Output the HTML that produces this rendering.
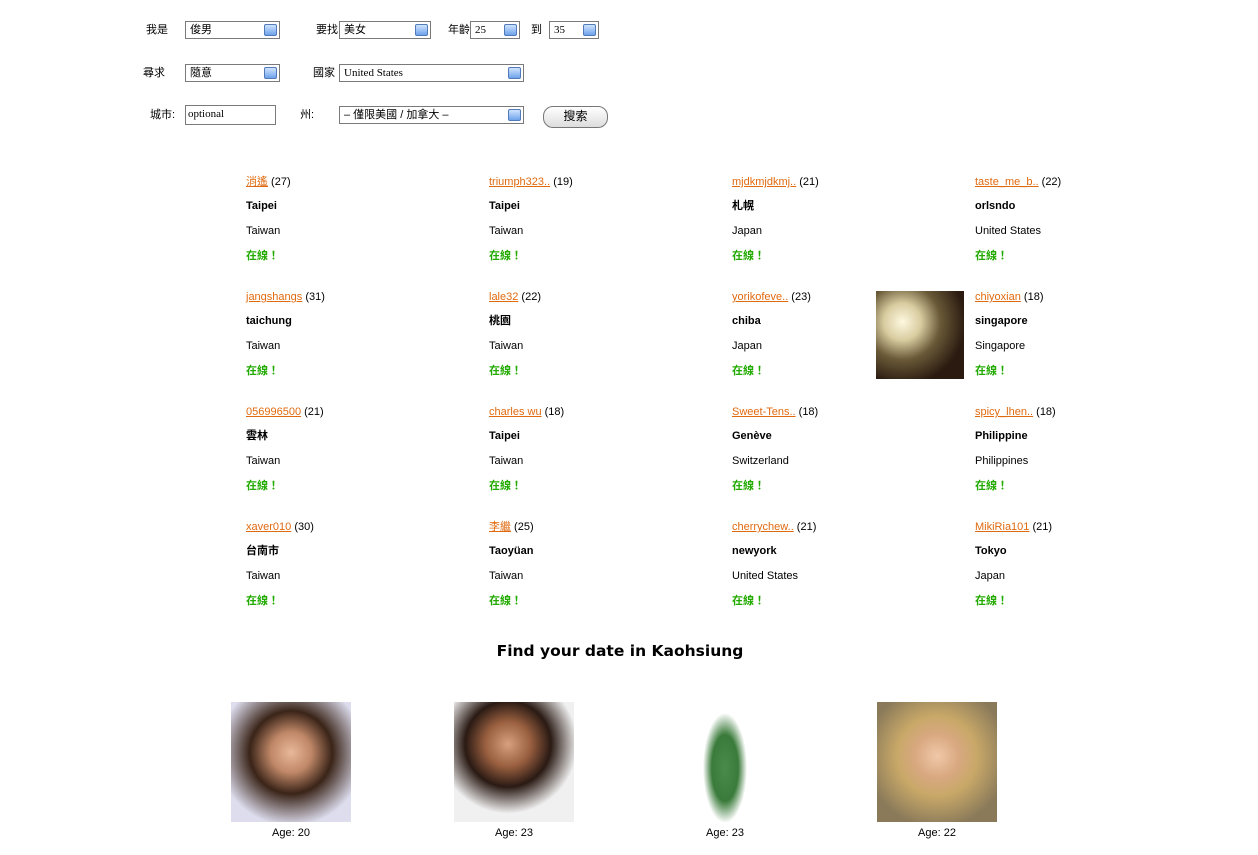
<!DOCTYPE html>
<html><head><meta charset="utf-8"><style>
body{margin:0;width:1258px;height:855px;background:#fff;position:relative;font-family:"Liberation Sans","Noto Sans CJK TC",sans-serif;font-size:11px;color:#000;overflow:hidden}
.a{position:absolute;white-space:nowrap;line-height:13px}
.sel{position:absolute;height:18px;border:1px solid #7a7a7a;box-sizing:border-box;background:#fff;font-size:11px;line-height:16px;padding-left:4px}
.sel:after{content:"";position:absolute;right:2px;top:2px;width:13px;height:12px;background:linear-gradient(#cfe3ff,#6ea3ea);border:1px solid #5279b8;border-radius:2px;box-sizing:border-box}
.inp{position:absolute;border:1px solid #7a7a7a;box-sizing:border-box;background:#fff;font-size:11px;line-height:16px;padding-left:2px}
.n{color:#e06a10;text-decoration:underline}
.c{font-weight:bold}
.o{color:#22aa00;font-weight:bold}
.ph{position:absolute;width:120px;height:120px}
.age{position:absolute;width:120px;text-align:center;font-size:11px}
</style></head><body>
<div class="a" style="left:146px;top:24px">我是</div>
<div class="sel" style="left:185px;top:21px;width:95px">俊男</div>
<div class="a" style="left:316px;top:24px">要找</div>
<div class="sel" style="left:339px;top:21px;width:92px">美女</div>
<div class="a" style="left:448px;top:24px">年齡</div>
<div class="sel" style="left:470px;top:21px;width:50px;font-family:'Liberation Serif',serif">25</div>
<div class="a" style="left:531px;top:24px">到</div>
<div class="sel" style="left:549px;top:21px;width:50px;font-family:'Liberation Serif',serif">35</div>
<div class="a" style="left:143px;top:67px">尋求</div>
<div class="sel" style="left:185px;top:64px;width:95px">隨意</div>
<div class="a" style="left:313px;top:67px">國家</div>
<div class="sel" style="left:339px;top:64px;width:185px;font-family:'Liberation Serif',serif">United States</div>
<div class="a" style="left:150px;top:109px">城市:</div>
<div class="inp" style="left:185px;top:105px;width:91px;height:20px;font-family:'Liberation Serif',serif">optional</div>
<div class="a" style="left:300px;top:109px">州:</div>
<div class="sel" style="left:339px;top:106px;width:185px">– 僅限美國 / 加拿大 –</div>
<div class="a" style="left:543px;top:106px;width:63px;height:20px;border:1px solid #777;border-radius:10px;background:linear-gradient(#fff,#ddd);text-align:center;line-height:19px;font-size:12px">搜索</div>

<div id="g"></div>
<div class="a" style="left:876px;top:291px;width:88px;height:88px;background:linear-gradient(#000 0,transparent 0),radial-gradient(circle at 30% 35%,#fff8e0 0,#d8cca0 22%,#6a5a38 45%,#2a1a10 75%)"></div>

<div class="a" style="left:0;width:1240px;top:641px;text-align:center;font-weight:bold;font-size:15.5px;line-height:20px;font-family:'DejaVu Sans',sans-serif">Find your date in Kaohsiung</div>

<div class="ph" style="left:231px;top:702px;background:radial-gradient(circle at 50% 42%,#e8b89a 0,#c08868 22%,#3a2418 45%,#dde 80%)"></div>
<div class="ph" style="left:454px;top:702px;background:radial-gradient(circle at 45% 35%,#d8a080 0,#9a6040 22%,#2a1a14 42%,#f0f0f0 68%),#eee"></div>
<div class="ph" style="left:665px;top:702px;background:radial-gradient(ellipse 22px 55px at 50% 55%,#4a8a4a 0,#3a7a3a 60%,#fff 100%)"></div>
<div class="ph" style="left:877px;top:702px;background:radial-gradient(circle at 50% 45%,#f0c8a8 0,#d8a880 25%,#c8a868 45%,#8a7a5a 80%)"></div>
<div class="age" style="left:231px;top:827px">Age: 20</div>
<div class="age" style="left:454px;top:827px">Age: 23</div>
<div class="age" style="left:665px;top:827px">Age: 23</div>
<div class="age" style="left:877px;top:827px">Age: 22</div>
<script>
var d=[["消遙","27","Taipei","Taiwan"],["triumph323..","19","Taipei","Taiwan"],["mjdkmjdkmj..","21","札幌","Japan"],["taste_me_b..","22","orlsndo","United States"],
["jangshangs","31","taichung","Taiwan"],["lale32","22","桃園","Taiwan"],["yorikofeve..","23","chiba","Japan"],["chiyoxian","18","singapore","Singapore"],
["056996500","21","雲林","Taiwan"],["charles wu","18","Taipei","Taiwan"],["Sweet-Tens..","18","Genève","Switzerland"],["spicy_lhen..","18","Philippine","Philippines"],
["xaver010","30","台南市","Taiwan"],["李繼","25","Taoyüan","Taiwan"],["cherrychew..","21","newyork","United States"],["MikiRia101","21","Tokyo","Japan"]];
var xs=[246,489,732,975],h="";
d.forEach(function(r,i){var x=xs[i%4],y=176+Math.floor(i/4)*115;
h+='<div class="a" style="left:'+x+'px;top:'+y+'px"><span class="n">'+r[0]+'</span> ('+r[1]+')</div>';
h+='<div class="a c" style="left:'+x+'px;top:'+(y+24)+'px">'+r[2]+'</div>';
h+='<div class="a" style="left:'+x+'px;top:'+(y+49)+'px">'+r[3]+'</div>';
h+='<div class="a o" style="left:'+x+'px;top:'+(y+74)+'px">在線！</div>';});
document.getElementById("g").innerHTML=h;
</script>
</body></html>
